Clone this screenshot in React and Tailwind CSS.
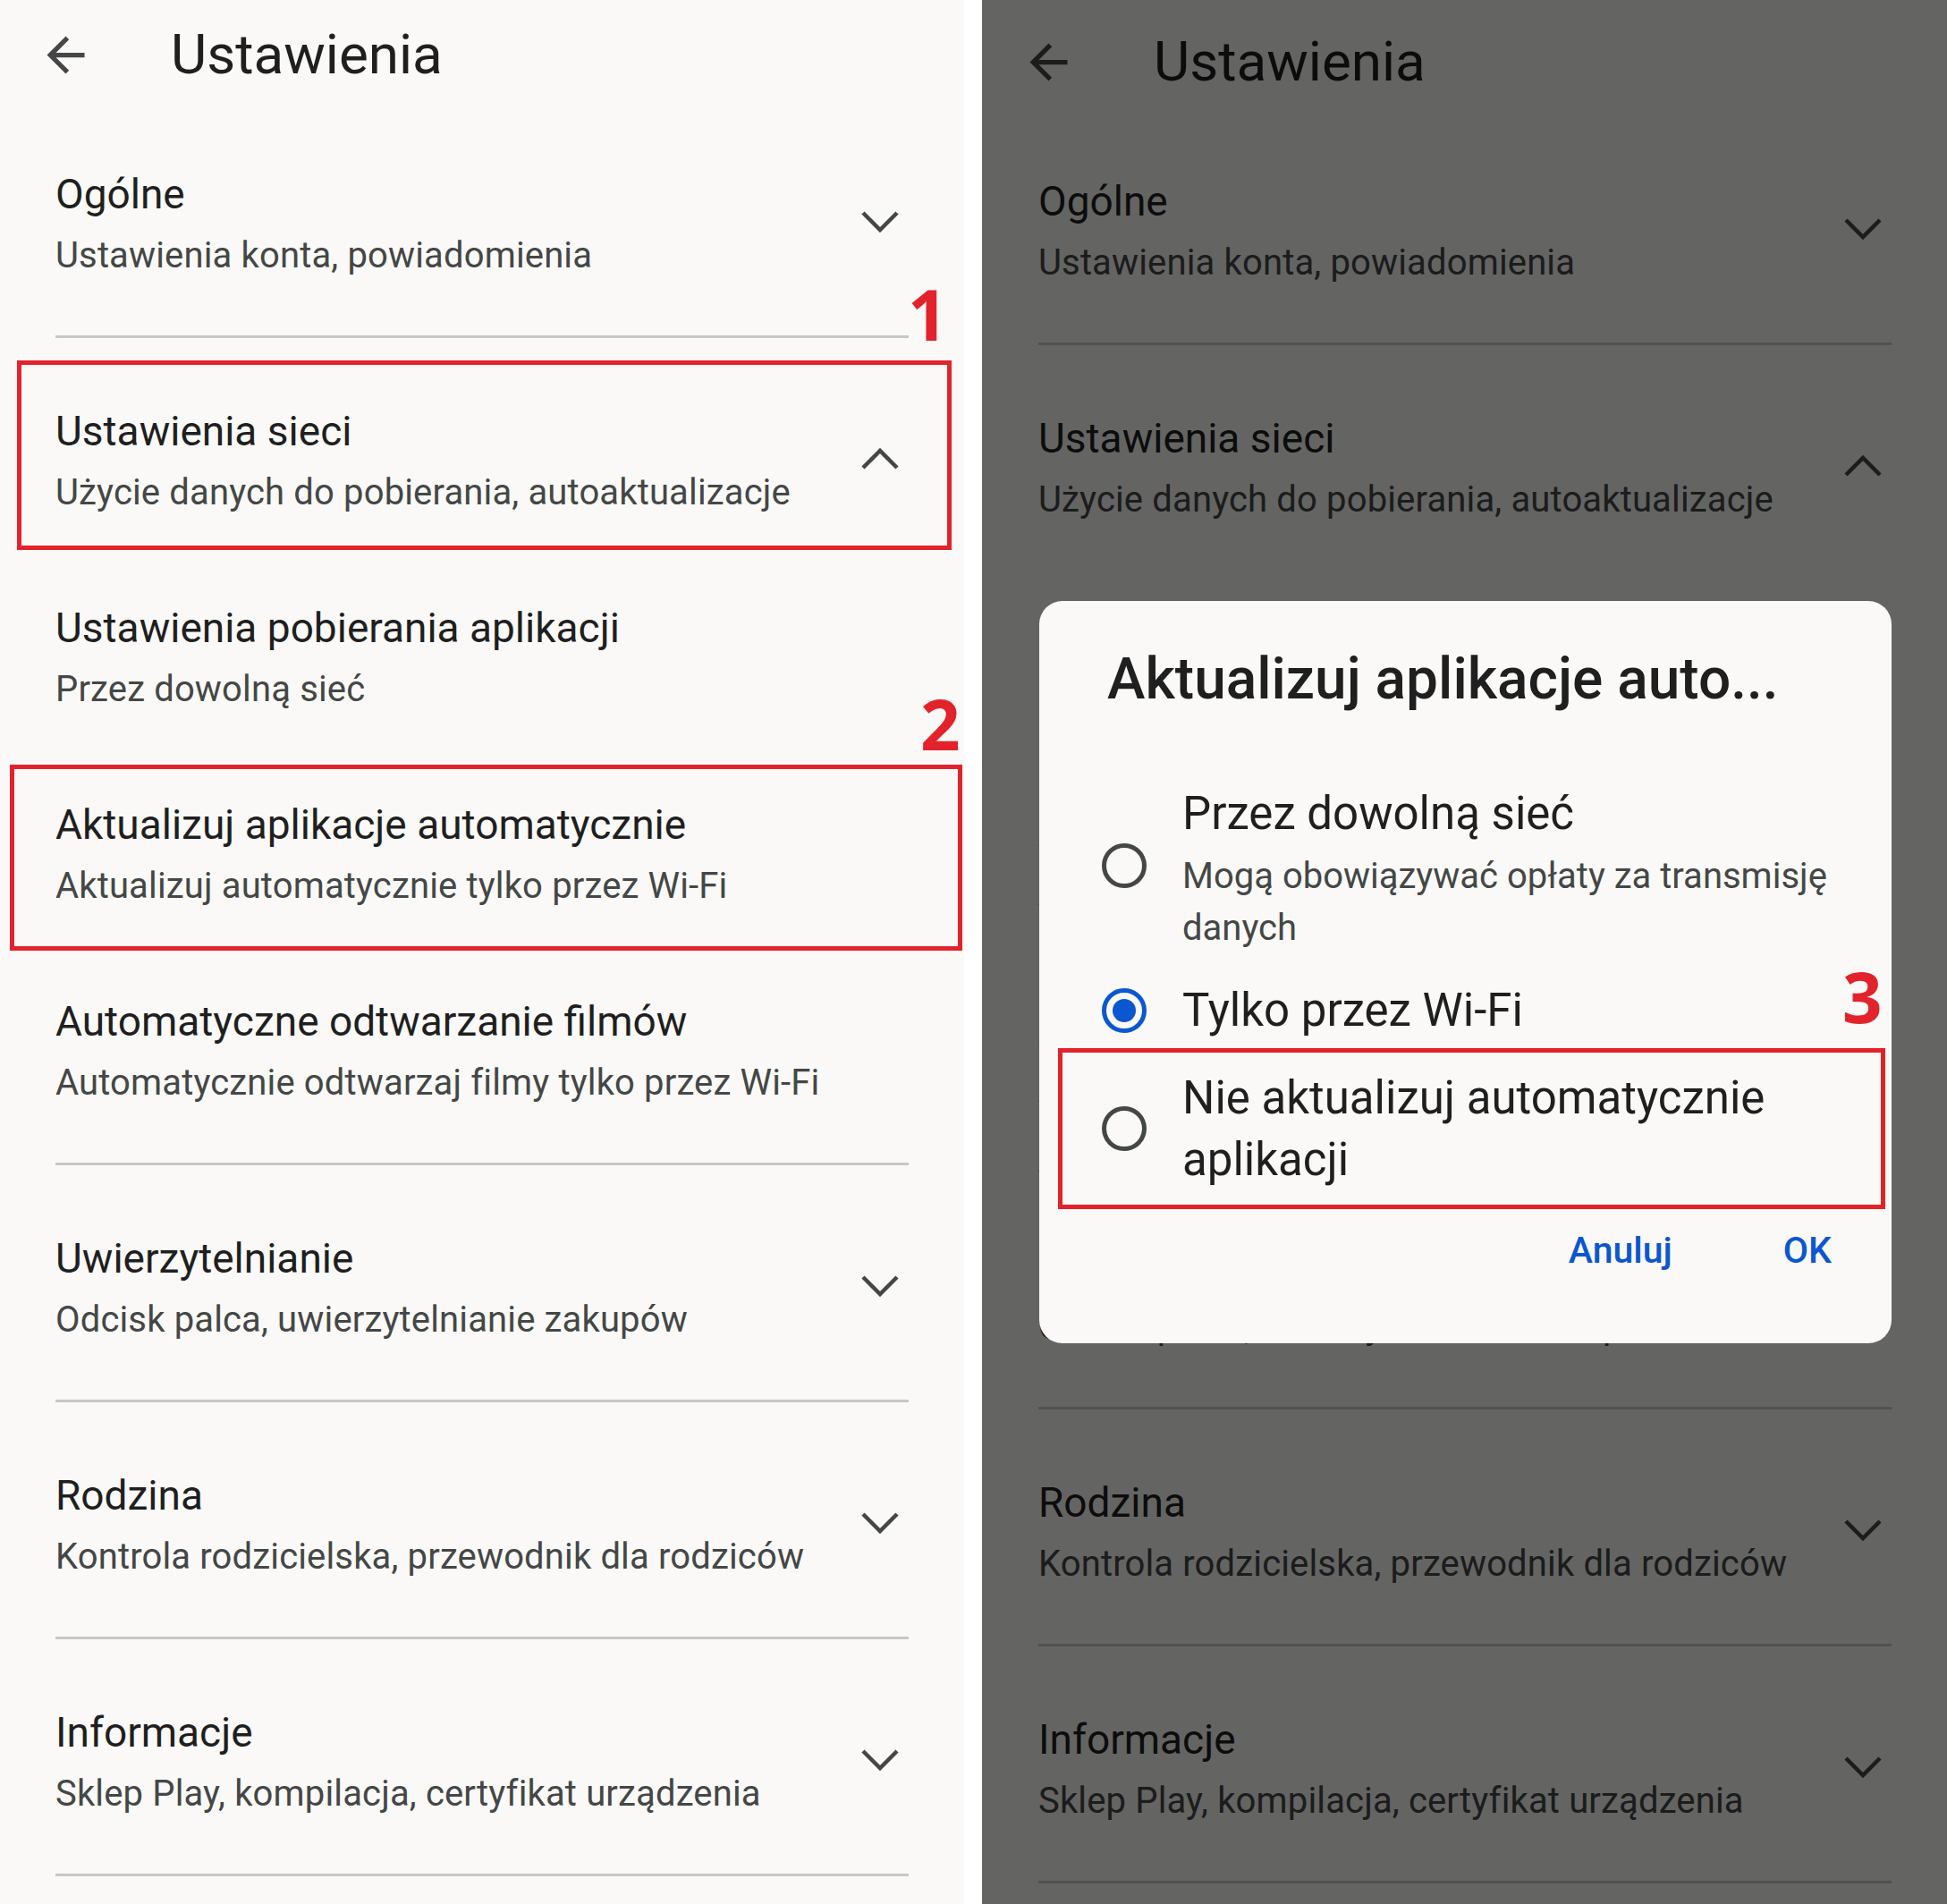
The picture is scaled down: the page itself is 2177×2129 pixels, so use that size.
const SECTIONS = [
  { title: 'Ogólne', sub: 'Ustawienia konta, powiadomienia' },
  {
    title: 'Ustawienia sieci',
    sub: 'Użycie danych do pobierania, autoaktualizacje',
    open: true,
    children: [
      { title: 'Ustawienia pobierania aplikacji', sub: 'Przez dowolną sieć' },
      { title: 'Aktualizuj aplikacje automatycznie', sub: 'Aktualizuj automatycznie tylko przez Wi-Fi' },
      { title: 'Automatyczne odtwarzanie filmów', sub: 'Automatycznie odtwarzaj filmy tylko przez Wi-Fi' },
    ],
  },
  { title: 'Uwierzytelnianie', sub: 'Odcisk palca, uwierzytelnianie zakupów' },
  { title: 'Rodzina', sub: 'Kontrola rodzicielska, przewodnik dla rodziców' },
  { title: 'Informacje', sub: 'Sklep Play, kompilacja, certyfikat urządzenia' },
];

function Chevron({ up }) {
  return (
    <svg width="42" height="26" viewBox="0 0 42 26" fill="none" stroke="#444746" strokeWidth="4.5">
      <polyline points={up ? '2,23 21,4 40,23' : '2,3 21,22 40,3'} />
    </svg>
  );
}

function Item({ title, sub, chevron }) {
  return (
    <div className="flex h-[220px] items-center">
      <div className="mt-[12px] flex-1 whitespace-nowrap">
        <p className="text-[46px] leading-[56px] text-[#1f1f1f]">{title}</p>
        <p className="mt-[15px] text-[40px] leading-[52px] tracking-[0.15px] text-[#444746]">{sub}</p>
      </div>
      {chevron && <div className="mr-[11px] mt-[8px] flex w-[42px] justify-center">{chevron}</div>}
    </div>
  );
}

function SettingsList() {
  return (
    <div className="font-[Roboto,sans-serif]">
      <header className="h-[113px] pt-[21px]">
        <div className="flex h-[80px] items-center pl-[42px]">
          <svg width="63" height="63" viewBox="0 0 24 24" fill="#444746">
            <path d="M20 11H7.83l5.59-5.59L12 4l-8 8 8 8 1.41-1.41L7.83 13H20v-2z" />
          </svg>
          <h1 className="ml-[86px] text-[62px] leading-[80px] text-[#1f1f1f]">Ustawienia</h1>
        </div>
      </header>

      {SECTIONS.map((s) => (
        <section key={s.title} className="mx-[62px] border-b-[3px] border-[#c7c7c7] py-[21px]">
          <Item title={s.title} sub={s.sub} chevron={<Chevron up={s.open} />} />
          {s.open && s.children.map((c) => <Item key={c.title} title={c.title} sub={c.sub} />)}
        </section>
      ))}
    </div>
  );
}

function Radio({ checked, className = '' }) {
  if (checked) {
    return (
      <div className={`flex h-[50px] w-[50px] shrink-0 items-center justify-center rounded-full border-[5px] border-[#0b57d0] ${className}`}>
        <div className="h-[26px] w-[26px] rounded-full bg-[#0b57d0]" />
      </div>
    );
  }
  return <div className={`h-[50px] w-[50px] shrink-0 rounded-full border-[5px] border-[#444746] ${className}`} />;
}

function UpdateDialog() {
  return (
    <div className="absolute left-[64px] top-[672px] h-[830px] w-[953px] rounded-[26px] bg-[#faf9f7] pl-[70px] pt-[48px] font-[Roboto,sans-serif] text-[#1f1f1f]">
      <h2 className="pl-[6px] text-[64px] font-medium leading-[80px]">Aktualizuj aplikacje auto...</h2>

      <div className="mt-[80px] flex items-start gap-[40px]">
        <Radio className="mt-[63px]" />
        <div>
          <p className="text-[51px] leading-[60px]">Przez dowolną sieć</p>
          <p className="mt-[11px] text-[40px] leading-[58px] text-[#444746]">
            Mogą obowiązywać opłaty za transmisję
            <br />
            danych
          </p>
        </div>
      </div>

      <div className="mt-[33px] flex items-center gap-[40px]">
        <Radio checked />
        <p className="text-[51px] leading-[60px]">Tylko przez Wi-Fi</p>
      </div>

      <div className="mt-[33px] flex items-center gap-[40px]">
        <Radio />
        <p className="text-[51px] leading-[69px]">
          Nie aktualizuj automatycznie
          <br />
          aplikacji
        </p>
      </div>

      <div className="mt-[39px] flex justify-end gap-[124px] pr-[67px] text-[41px] font-medium leading-[56px] text-[#0b57d0]">
        <span>Anuluj</span>
        <span>OK</span>
      </div>
    </div>
  );
}

function Mark({ className, children }) {
  return (
    <div className={`absolute font-['Open_Sans',sans-serif] text-[78px] font-bold leading-[78px] text-[#e2232b] ${className}`}>
      {children}
    </div>
  );
}

export default function App() {
  return (
    <div className="flex h-[2129px] w-[2177px] overflow-hidden bg-white">
      <div className="relative w-[1078px] shrink-0 bg-[#faf9f7]">
        <SettingsList />
        <div className="absolute left-[19px] top-[403px] h-[212px] w-[1045px] border-[5px] border-[#e2232b]" />
        <div className="absolute left-[11px] top-[855px] h-[208px] w-[1065px] border-[5px] border-[#e2232b]" />
        <Mark className="left-[1015px] top-[312px]">1</Mark>
        <Mark className="left-[1029px] top-[770px]">2</Mark>
      </div>

      <div className="w-[20px] shrink-0 bg-white" />

      <div className="relative w-[1079px] shrink-0 overflow-hidden bg-[#faf9f7]">
        <div className="pl-[1px] pt-[8px]">
          <SettingsList />
        </div>
        <div className="absolute inset-0 bg-black/60" />
        <UpdateDialog />
        <div className="absolute left-[85px] top-[1172px] h-[180px] w-[925px] border-[5px] border-[#e2232b]" />
        <Mark className="left-[962px] top-[1075px]">3</Mark>
      </div>
    </div>
  );
}
